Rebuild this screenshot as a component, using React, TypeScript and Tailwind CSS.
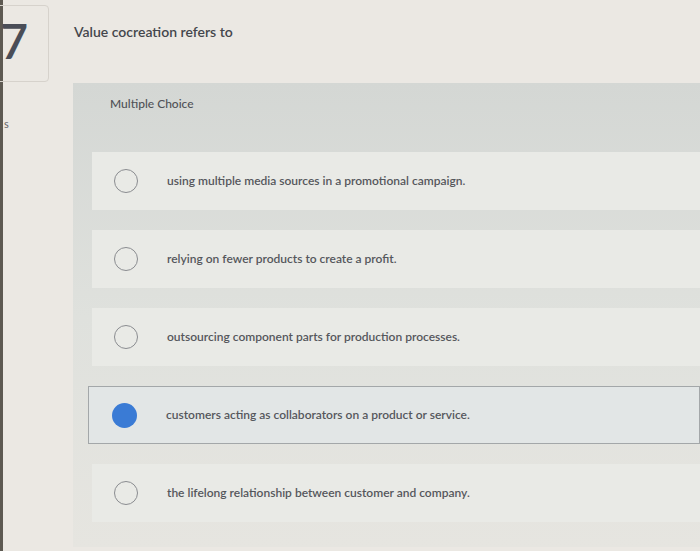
import React from "react";

const options = [
  "using multiple media sources in a promotional campaign.",
  "relying on fewer products to create a profit.",
  "outsourcing component parts for production processes.",
  "customers acting as collaborators on a product or service.",
  "the lifelong relationship between customer and company.",
];

export default function App() {
  return (
    <div
      className="w-[700px] h-[551px] bg-[#ebe8e3] flex overflow-hidden"
      style={{ fontFamily: "Lato, 'Liberation Sans', sans-serif" }}
    >
      <div className="w-[3px] h-full bg-[#5d5952] shrink-0" />
      <div className="w-[70px] shrink-0 flex flex-col">
        <div className="mt-[5px] w-[60px] h-[77px] ml-[-14px] border border-[#d6d2cc] rounded-[4px] flex items-start justify-end pr-[20px] pt-[11px] overflow-hidden">
          <span className="text-[48px] leading-none font-semibold text-[#4a4d57]">7</span>
        </div>
        <span className="mt-[36px] text-[11px] leading-none text-[#666] ml-[1px]">s</span>
      </div>
      <div className="flex-1 flex flex-col">
        <div className="h-[83px] pt-[21px] pl-[1px] text-[14px] text-[#44464c] font-semibold">
          Value cocreation refers to
        </div>
        <div className="flex-1 mb-[4px] bg-gradient-to-b from-[#d4d7d4] via-[#dfe1dd] to-[#e6e5e0] flex flex-col">
          <div className="h-[69px] pl-[37px] pt-[12px] text-[12px] text-[#505257] font-medium">
            Multiple Choice
          </div>
          <div className="flex flex-col gap-[20px] pl-[19px]">
            {options.map((t, i) => {
              const selected = i === 3;
              return (
                <div
                  key={i}
                  className={
                    selected
                      ? "h-[58px] ml-[-4px] pl-[23px] flex items-center bg-[#e2e6e6] border border-[#a3a7a9]"
                      : "h-[58px] pl-[22px] flex items-center bg-[#e9eae6]"
                  }
                >
                  {selected ? (
                    <div className="w-[25px] h-[25px] rounded-full bg-[#3a7bd5] shrink-0" />
                  ) : (
                    <div className="w-[24px] h-[24px] rounded-full border-[1.5px] border-[#8a8c90] shrink-0" />
                  )}
                  <span className="ml-[29px] text-[12px] font-semibold text-[#55575c]">
                    {t}
                  </span>
                </div>
              );
            })}
          </div>
        </div>
      </div>
    </div>
  );
}
